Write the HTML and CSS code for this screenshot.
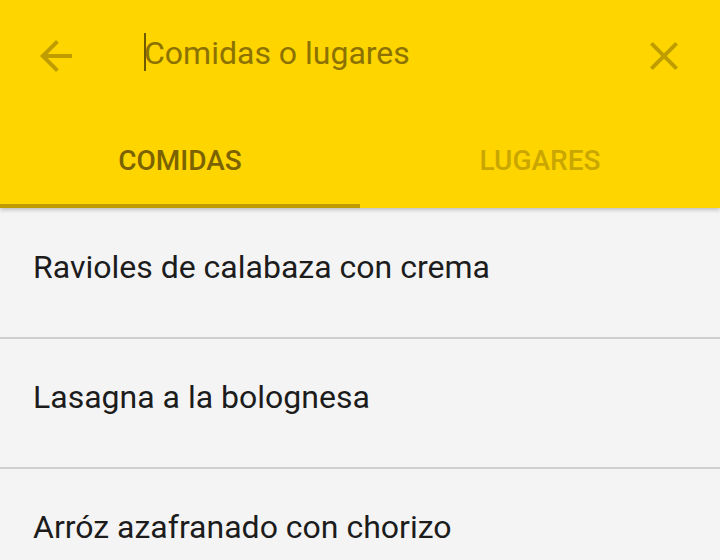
FILE: index.html
```html
<!DOCTYPE html>
<html lang="es">
<head>
<meta charset="utf-8">
<title>Buscar</title>
<link rel="stylesheet" href="styles.css">
</head>
<body>
<header class="appbar">
  <div class="toolbar">
    <button class="icon-btn" aria-label="Atrás">
      <svg viewBox="0 0 24 24" width="48" height="48"><path d="M20 11H7.83l5.59-5.59L12 4l-8 8 8 8 1.41-1.41L7.83 13H20v-2z"/></svg>
    </button>
    <div class="search"><span class="cursor"></span><span class="placeholder">Comidas o lugares</span></div>
    <button class="icon-btn" aria-label="Borrar">
      <svg viewBox="0 0 24 24" width="48" height="48"><path d="M19 6.41L17.59 5 12 10.59 6.41 5 5 6.41 10.59 12 5 17.59 6.41 19 12 13.41 17.59 19 19 17.59 13.41 12z"/></svg>
    </button>
  </div>
  <nav class="tabs">
    <div class="tab active">COMIDAS</div>
    <div class="tab">LUGARES</div>
  </nav>
</header>
<ul class="list">
  <li class="row">Ravioles de calabaza con crema</li>
  <li class="row">Lasagna a la bolognesa</li>
  <li class="row">Arróz azafranado con chorizo</li>
</ul>
</body>
</html>
```
FILE: styles.css
```css
html, body {
  margin: 0;
  padding: 0;
  height: 100%;
  overflow: hidden;
}
body {
  background: #f4f4f4;
  font-family: Roboto, "Liberation Sans", sans-serif;
  display: flex;
  flex-direction: column;
}
.appbar {
  background: #ffd500;
  position: relative;
  z-index: 1;
  flex: none;
  box-shadow: 0 2px 4px rgba(0, 0, 0, 0.22);
}
.toolbar {
  height: 112px;
  display: flex;
  align-items: center;
  padding: 0 32px;
  box-sizing: border-box;
}
.icon-btn {
  width: 48px;
  height: 48px;
  padding: 0;
  border: 0;
  background: none;
  display: flex;
  fill: #bf9d00;
}
.search {
  flex: 1;
  margin-left: 64px;
  margin-bottom: 8px;
  display: flex;
  align-items: center;
  height: 38px;
}
.cursor {
  width: 2px;
  height: 38px;
  background: #6e5a00;
  flex: none;
}
.placeholder {
  font-size: 32px;
  line-height: 38px;
  color: #8c7200;
  padding-top: 1px;
  margin-left: -2px;
}
.tabs {
  display: flex;
  height: 96px;
}
.tab {
  flex: 1;
  display: flex;
  align-items: center;
  justify-content: center;
  font-size: 28px;
  font-weight: 500;
  color: #c9a700;
  box-sizing: border-box;
  padding-top: 1px;
}
.tab.active {
  color: #7a6300;
  border-bottom: 4px solid #c09b00;
  padding-top: 4px;
}
.list {
  list-style: none;
  margin: 0;
  padding: 1px 0 0;
  flex: 1;
  min-height: 0;
  overflow: hidden;
}
.row {
  height: 130px;
  box-sizing: border-box;
  border-bottom: 2px solid #cfcfcf;
  display: flex;
  align-items: center;
  padding: 0 32px 12px 33px;
  font-size: 32px;
  color: #1c1c1c;
}
```
